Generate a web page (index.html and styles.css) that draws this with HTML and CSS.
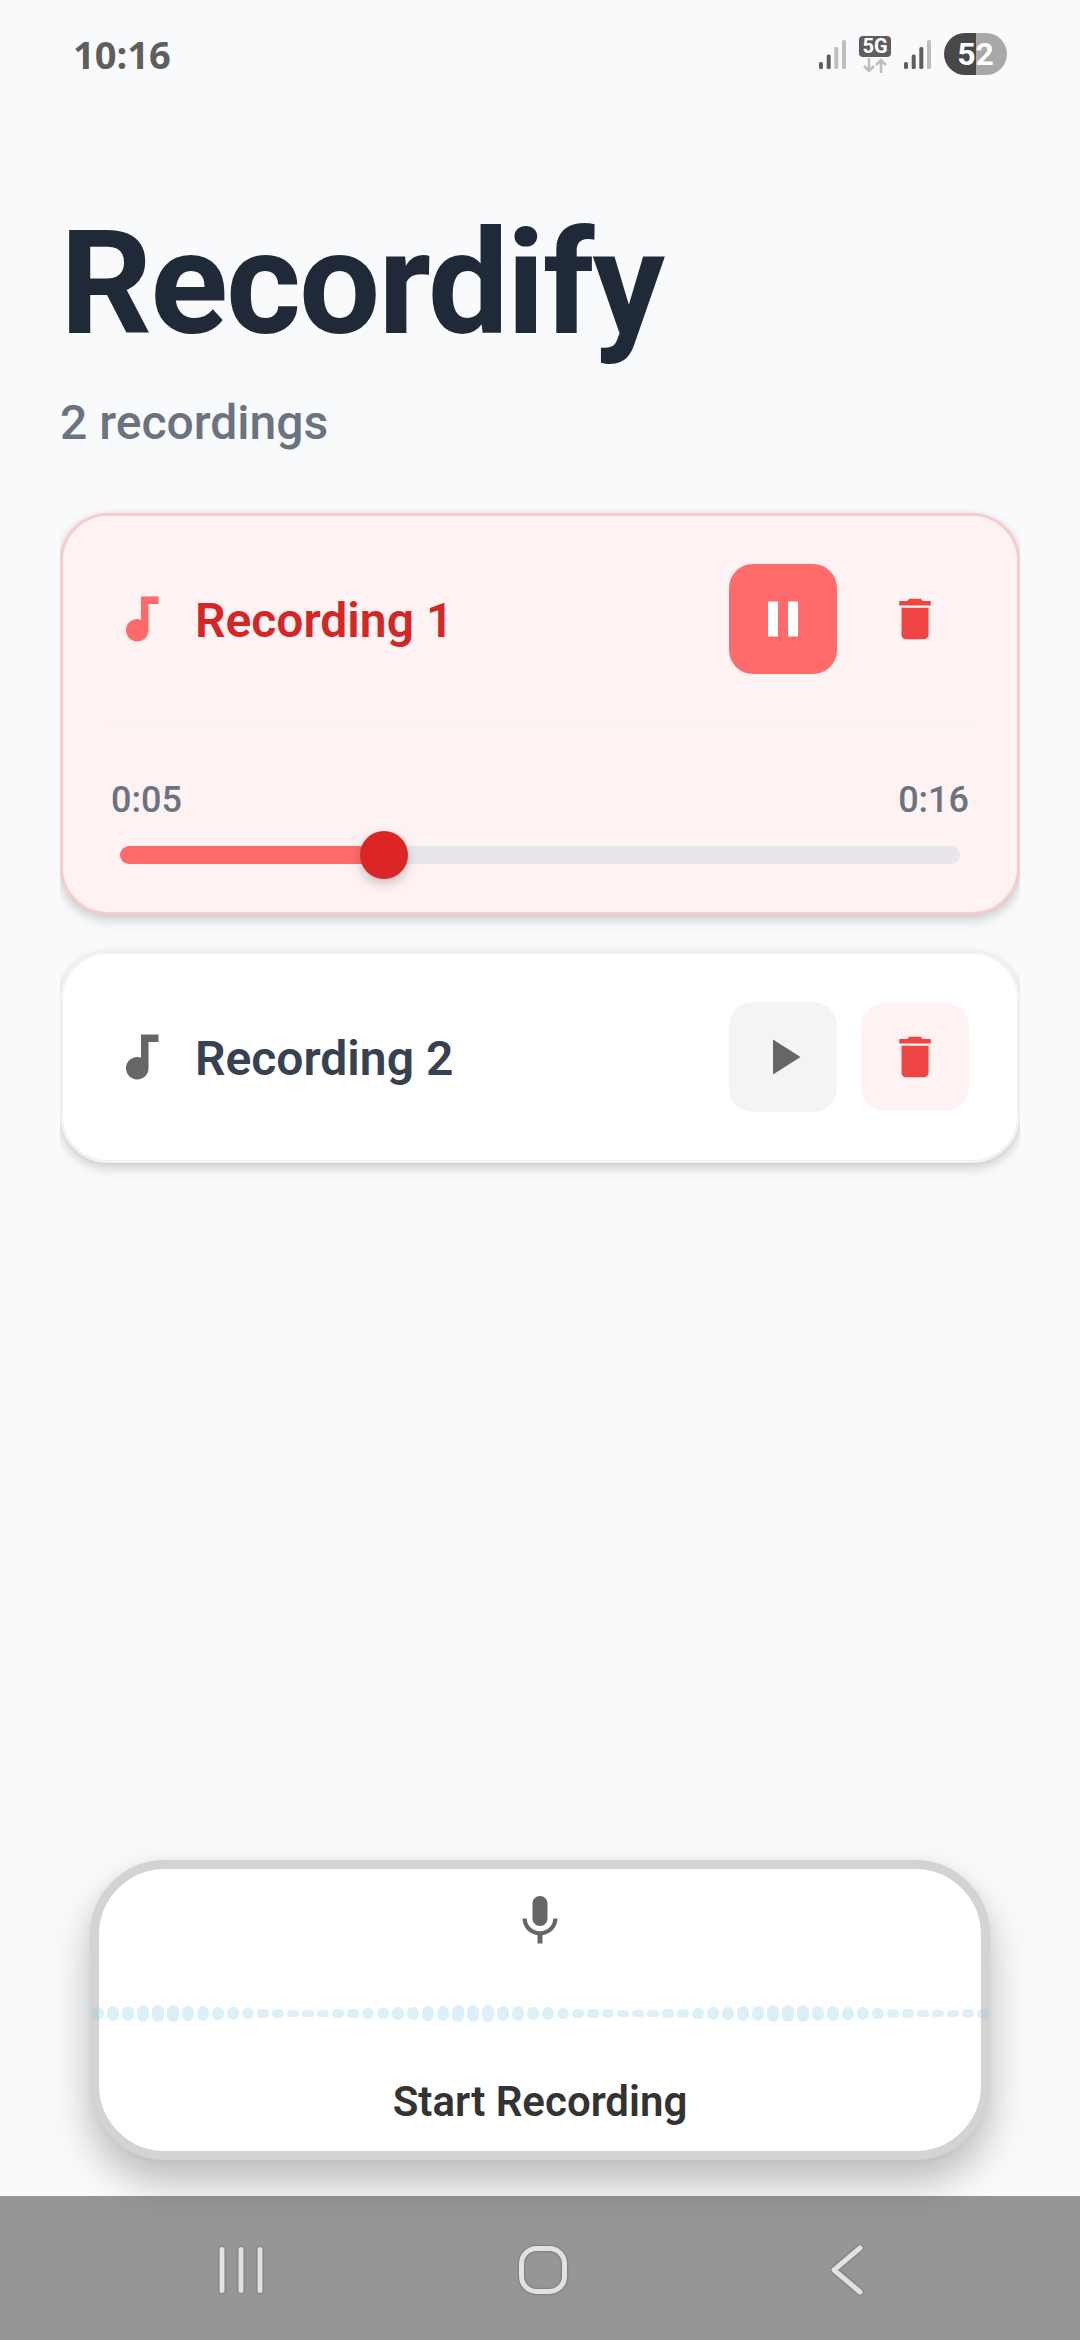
FILE: index.html
```html
<!DOCTYPE html>
<html lang="en">
<head>
<meta charset="utf-8">
<meta name="viewport" content="width=device-width, initial-scale=1">
<title>Recordify</title>
<link rel="stylesheet" href="styles.css">
</head>
<body>
<header class="status">
  <time class="clock">10:16</time>
  <div class="indicators">
    <svg class="signal" viewBox="0 0 27 29" aria-hidden="true"><g fill="#5e5e5e"><rect x="0" y="22" width="4" height="7" rx="1.5"/><rect x="7.7" y="14.5" width="4" height="14.5" rx="1.5"/></g><g fill="#bdbebf"><rect x="15.3" y="7" width="4" height="22" rx="1.5"/><rect x="23" y="0" width="4" height="29" rx="1.5"/></g></svg>
    <div class="network">
      <span class="network-label">5G</span>
      <svg class="arrows" viewBox="0 0 24 15" aria-hidden="true"><path d="M6 0v13M1 8l5 5 5-5M18 15V2M13 7l5-5 5 5" fill="none" stroke="#bdbebf" stroke-width="2.5"/></svg>
    </div>
    <svg class="signal" viewBox="0 0 27 29" aria-hidden="true"><g fill="#5e5e5e"><rect x="0" y="22" width="4" height="7" rx="1.5"/><rect x="7.7" y="14.5" width="4" height="14.5" rx="1.5"/><rect x="15.3" y="7" width="4" height="22" rx="1.5"/></g><rect x="23" y="0" width="4" height="29" rx="1.5" fill="#bdbebf"/></svg>
    <span class="battery">52</span>
  </div>
</header>

<main class="screen">
  <h1 class="title">Recordify</h1>
  <p class="count">2 recordings</p>

  <ul class="list">
    <li class="card card-active">
      <div class="row">
        <svg class="icon" viewBox="0 0 24 24" aria-hidden="true"><path d="M12 3v9.260c-.5-.17-1-.26-1.500-.26C8 12 6 14 6 16.500S8 21 10.500 21s4.500-2 4.500-4.500V6h4V3h-7z"/></svg>
        <h2 class="name">Recording 1</h2>
        <div class="actions">
          <button class="action action-pause" type="button" aria-label="Pause"><svg class="icon" viewBox="0 0 24 24"><path d="M6 19h4V5H6v14zm8-14v14h4V5h-4z"/></svg></button>
          <button class="action action-delete" type="button" aria-label="Delete Recording 1"><svg class="icon-small" viewBox="0 0 24 24"><path d="M6 19c0 1.100.9 2 2 2h8c1.100 0 2-.9 2-2V7H6v12zM19 4h-3.500l-1-1h-5l-1 1H5v2h14V4z"/></svg></button>
        </div>
      </div>
      <div class="player">
        <div class="times"><span>0:05</span><span>0:16</span></div>
        <input class="seek" type="range" min="0" max="16.5" step="0.1" value="5" aria-label="Playback position">
      </div>
    </li>
    <li class="card">
      <div class="row">
        <svg class="icon" viewBox="0 0 24 24" aria-hidden="true"><path d="M12 3v9.260c-.5-.17-1-.26-1.500-.26C8 12 6 14 6 16.500S8 21 10.500 21s4.500-2 4.500-4.500V6h4V3h-7z"/></svg>
        <h2 class="name">Recording 2</h2>
        <div class="actions">
          <button class="action action-play" type="button" aria-label="Play"><svg class="icon" viewBox="0 0 24 24"><path d="M8 5v14l11-7z"/></svg></button>
          <button class="action action-delete" type="button" aria-label="Delete Recording 2"><svg class="icon-small" viewBox="0 0 24 24"><path d="M6 19c0 1.100.9 2 2 2h8c1.100 0 2-.9 2-2V7H6v12zM19 4h-3.500l-1-1h-5l-1 1H5v2h14V4z"/></svg></button>
        </div>
      </div>
    </li>
  </ul>

  <button class="record" type="button">
    <svg class="icon" viewBox="0 0 24 24" aria-hidden="true"><path d="M12 14c1.660 0 2.990-1.340 2.990-3L15 5c0-1.660-1.340-3-3-3S9 3.340 9 5v6c0 1.660 1.340 3 3 3zm5.300-3c0 3-2.540 5.100-5.300 5.100S6.700 14 6.700 11H5c0 3.410 2.720 6.230 6 6.720V21h2v-3.280c3.280-.48 6-3.300 6-6.720h-1.700z"/></svg>
    <span class="wave" aria-hidden="true"><i class="b4"></i><i class="b5"></i><i class="b5"></i><i class="b6"></i><i class="b6"></i><i class="b6"></i><i class="b5"></i><i class="b5"></i><i class="b4"></i><i class="b4"></i><i class="b3"></i><i class="b2"></i><i class="b2"></i><i class="b1"></i><i class="b1"></i><i class="b1"></i><i class="b2"></i><i class="b2"></i><i class="b3"></i><i class="b3"></i><i class="b4"></i><i class="b4"></i><i class="b5"></i><i class="b5"></i><i class="b6"></i><i class="b6"></i><i class="b6"></i><i class="b5"></i><i class="b5"></i><i class="b4"></i><i class="b4"></i><i class="b3"></i><i class="b2"></i><i class="b2"></i><i class="b2"></i><i class="b1"></i><i class="b1"></i><i class="b1"></i><i class="b2"></i><i class="b2"></i><i class="b3"></i><i class="b4"></i><i class="b4"></i><i class="b5"></i><i class="b5"></i><i class="b6"></i><i class="b6"></i><i class="b6"></i><i class="b5"></i><i class="b5"></i><i class="b4"></i><i class="b4"></i><i class="b3"></i><i class="b2"></i><i class="b2"></i><i class="b1"></i><i class="b1"></i><i class="b1"></i><i class="b2"></i><i class="b2"></i></span>
    <span class="record-label">Start Recording</span>
  </button>
</main>

<nav class="navbar" aria-label="System">
  <button class="nav-button" type="button" aria-label="Recent apps"><svg class="nav-icon" viewBox="0 0 54 54"><path d="M8 6.500v41M27 6.500v41M46 6.500v41"/></svg></button>
  <button class="nav-button" type="button" aria-label="Home"><svg class="nav-icon" viewBox="0 0 54 54"><rect x="5.500" y="5.500" width="43" height="43" rx="15"/></svg></button>
  <button class="nav-button" type="button" aria-label="Back"><svg class="nav-icon" viewBox="0 0 54 54"><path d="M41 5L15 27l26 22"/></svg></button>
</nav>
</body>
</html>
```
FILE: styles.css
```css
* { box-sizing: border-box; }

body {
  margin: 0;
  min-height: 100vh;
  display: flex;
  flex-direction: column;
  background: #f8fafc;
  font-family: Roboto, sans-serif;
}

button {
  padding: 0;
  border: 0;
  font: inherit;
  color: inherit;
}

svg { display: block; fill: currentColor; }

/* Status bar */
.status {
  display: flex;
  align-items: center;
  justify-content: space-between;
  height: 108px;
  padding: 0 73px;
}

.clock {
  font: 700 38px/54px "Open Sans", sans-serif;
  color: #5e5e5e;
}

.indicators { display: flex; align-items: center; gap: 13px; }
.signal { width: 27px; height: 29px; margin-bottom: -1px; }

.network { display: flex; flex-direction: column; align-items: center; gap: 1px; }

.network-label {
  width: 32px;
  border-radius: 4px;
  background: #5e5e5e;
  color: #fff;
  font: 700 20px/21px Roboto, sans-serif;
  text-align: center;
}

.arrows { width: 24px; height: 15px; }

.battery {
  width: 63px;
  border-radius: 21px;
  background: linear-gradient(90deg, #484848 32px, #a8a8a8 32px);
  color: #fff;
  font: 700 32px/42px Roboto, sans-serif;
  text-align: center;
}

/* Main screen */
.screen {
  flex: 1;
  display: flex;
  flex-direction: column;
  padding: 92px 60px 36px;
}

.title {
  margin: 0;
  font-size: 144px;
  line-height: 168px;
  font-weight: 700;
  letter-spacing: -2px;
  color: #1f2937;
}

.count {
  margin: 27px 0 0;
  font-size: 48px;
  line-height: 56px;
  font-weight: 500;
  color: #6b7280;
}

.list {
  display: flex;
  flex-direction: column;
  gap: 36px;
  margin: 62px 0 48px;
  padding: 0;
  list-style: none;
  overflow-x: clip;
}

.card {
  padding: 48px;
  border: 3px solid #f1f2f3;
  border-radius: 48px;
  background: #fff;
  box-shadow: 0 5px 12px rgba(0, 0, 0, .18), 0 0 4px rgba(0, 0, 0, .06);
  color: #666;
}

.card-active { border-color: #f8cccd; background: #fef2f2; color: #ff6b6b; }

.row { display: flex; align-items: center; gap: 24px; }
.icon { width: 60px; height: 60px; }
.icon-small { width: 54px; height: 54px; }

.name {
  flex: 1;
  margin: 0;
  padding-top: 4px;
  font-size: 48px;
  line-height: 56px;
  font-weight: 600;
  color: #374151;
}

.card-active .name { color: #d32626; }

.actions { display: flex; align-items: center; gap: 24px; }

.action {
  display: grid;
  place-items: center;
  width: 108px;
  height: 108px;
  border-radius: 24px;
}

.action-play, .action-pause { height: 110px; }
.action-play { background: #f3f4f6; }
.action-pause { background: #ff6b6b; color: #fff; }
.action-delete { background: #fef2f2; color: #ef4444; }

.player {
  margin-top: 48px;
  padding-top: 48px;
  border-top: 3px solid #f7f2f6;
}

.times {
  display: flex;
  justify-content: space-between;
  font-size: 36px;
  line-height: 54px;
  font-weight: 500;
  color: #6b7280;
}

.seek {
  --played: 31%;
  appearance: none;
  display: block;
  width: calc(100% - 18px);
  height: 18px;
  margin: 19px 9px 0;
  border-radius: 9px;
  background: linear-gradient(90deg, #ff6b6b var(--played), #e5e7eb var(--played));
}

.seek::-webkit-slider-runnable-track { height: 18px; }

.seek::-webkit-slider-thumb {
  appearance: none;
  width: 48px;
  height: 48px;
  margin-top: -15px;
  border-radius: 50%;
  background: #dc2626;
  box-shadow: 0 5px 12px rgba(0, 0, 0, .2);
}

/* Record button */
.record {
  display: flex;
  flex-direction: column;
  align-items: center;
  justify-content: space-between;
  height: 300px;
  margin: auto 30px 0;
  padding: 22px 0 23px;
  border: 9px solid #d3d3d3;
  border-radius: 75px;
  background: #fff;
  box-shadow: 0 22px 40px rgba(0, 0, 0, .25), 0 0 10px rgba(0, 0, 0, .04);
  color: #666;
}

.wave {
  display: flex;
  align-items: center;
  justify-content: center;
  gap: 3px;
  height: 18px;
}

.wave i {
  flex: none;
  width: 12px;
  border-radius: 6px;
  background: rgba(135, 206, 235, .3);
}

.wave .b1 { height: 7px; }
.wave .b2 { height: 9px; }
.wave .b3 { height: 11px; }
.wave .b4 { height: 13px; }
.wave .b5 { height: 15px; }
.wave .b6 { height: 17px; }

.record-label {
  font-size: 42px;
  line-height: 52px;
  font-weight: 600;
  color: #333;
}

/* System navigation */
.navbar {
  position: relative;
  display: grid;
  grid-template-columns: repeat(3, 1fr);
  height: 144px;
  padding: 4px 83px 0 90px;
  background: rgba(0, 0, 0, .4);
}

.nav-button { display: grid; place-items: center; background: none; }

.nav-icon {
  width: 54px;
  height: 54px;
  fill: none;
  stroke: #e2e2e2;
  stroke-width: 5;
  stroke-linecap: round;
  stroke-linejoin: round;
  filter: drop-shadow(0 0 1px rgba(0, 0, 0, .4));
}
```
